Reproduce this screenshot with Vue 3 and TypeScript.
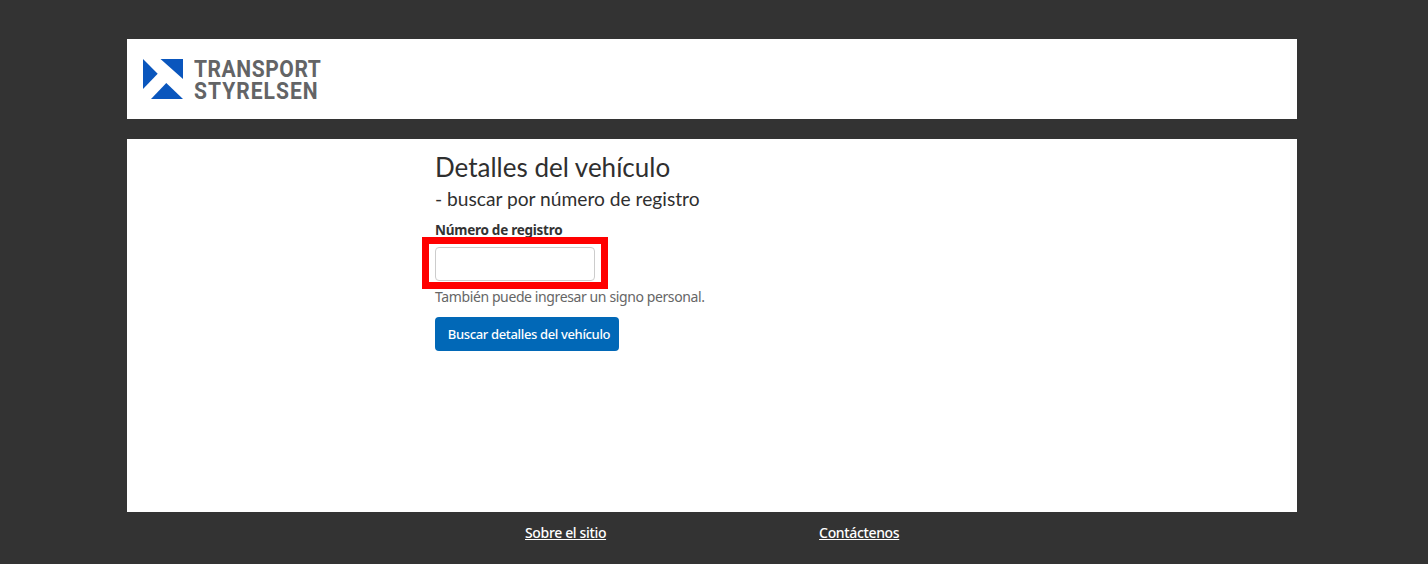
<script setup lang="ts">
const links: string[] = ['Sobre el sitio', 'Contáctenos']
</script>

<template>
  <div class="page">
    <header class="head">
      <div class="logo">
        <svg class="mark" width="40" height="40" viewBox="0 0 40 40" aria-hidden="true">
          <polygon points="17.5,0 40,0 40,20" fill="#0a56bd" />
          <polygon points="0,0 14.7,14.7 0,30" fill="#0a56bd" />
          <polygon points="8,40 23.3,24 40,40" fill="#0a56bd" />
        </svg>
        <div class="word">
          <span>TRANSPORT</span>
          <span class="second">STYRELSEN</span>
        </div>
      </div>
    </header>
    <main class="card">
      <div class="col">
        <h1>Detalles del vehículo</h1>
        <h2>- buscar por número de registro</h2>
        <label for="reg">Número de registro</label>
        <div class="mark-box"><input id="reg" type="text" /></div>
        <p class="hint">También puede ingresar un signo personal.</p>
        <button type="button">Buscar detalles del vehículo</button>
      </div>
    </main>
    <footer class="foot">
      <a v-for="l in links" :key="l" href="#">{{ l }}</a>
    </footer>
  </div>
</template>

<style>
html, body { background: #333; margin: 0; }
</style>

<style scoped>
.page {
  width: 1170px;
  margin-left: 127px;
  padding-top: 39px;
  font-family: "Noto Sans", sans-serif;
}
.head {
  height: 80px;
  background: #fff;
  display: flex;
  align-items: center;
  padding-left: 16px;
}
.logo { display: flex; align-items: center; gap: 11px; }
.mark { display: block; }
.word {
  display: flex;
  flex-direction: column;
  padding-top: 3px;
  font-family: "Roboto", sans-serif;
  font-weight: 700;
  font-size: 23px;
  line-height: 22px;
  color: #636466;
  letter-spacing: 0.6px;
  transform: scaleX(0.915);
  transform-origin: left center;
}
.second { letter-spacing: 1.1px; }
.card {
  margin-top: 20px;
  height: 373px;
  background: #fff;
  padding-left: 308px;
  box-sizing: border-box;
}
.col { display: flex; flex-direction: column; align-items: flex-start; }
h1 {
  margin: 12px 0 0;
  font-family: "Lato", sans-serif;
  font-weight: 400;
  font-size: 26px;
  line-height: 32px;
  color: #2f2f2f;
}
h2 {
  margin: 4px 0 0;
  font-family: "Lato", sans-serif;
  font-weight: 400;
  font-size: 19.2px;
  line-height: 24px;
  color: #2f2f2f;
}
label {
  margin-top: 10px;
  font-size: 13.5px;
  font-weight: 700;
  letter-spacing: -0.26px;
  line-height: 18px;
  color: #333;
}
.mark-box {
  margin: -2px 0 0 -13px;
  border: 7px solid #f00;
  padding: 3px 6px 1px;
  background: #fff;
  display: flex;
}
input {
  width: 160px;
  height: 34px;
  box-sizing: border-box;
  border: 1px solid #ccc;
  border-radius: 4px;
  background: #fff;
  padding: 0;
  display: block;
}
.hint {
  margin: -2px 0 0;
  font-size: 14px;
  letter-spacing: -0.39px;
  line-height: 20px;
  color: #666;
}
button {
  margin-top: 10px;
  width: 184px;
  height: 34px;
  border: 0;
  border-radius: 4px;
  background: #0168b7;
  color: #fff;
  font-family: "Noto Sans", sans-serif;
  font-size: 13px;
  font-weight: 500;
  letter-spacing: -0.35px;
  padding: 0 0 0 4px;
}
.foot {
  display: flex;
  padding-left: 398px;
  gap: 213px;
  margin-top: 12px;
}
.foot a {
  color: #fff;
  font-size: 14px;
  line-height: 18px;
  font-weight: 500;
  letter-spacing: -0.35px;
  text-decoration: underline;
}
</style>
